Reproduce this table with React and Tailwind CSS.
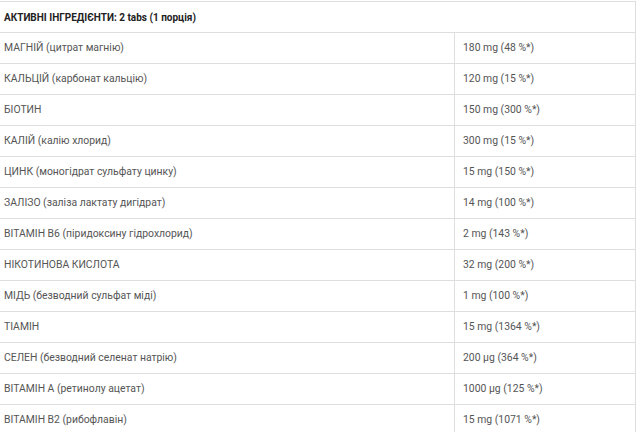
const rows = [
  ['МАГНІЙ (цитрат магнію)', '180 mg (48 %*)'],
  ['КАЛЬЦІЙ (карбонат кальцію)', '120 mg (15 %*)'],
  ['БІОТИН', '150 mg (300 %*)'],
  ['КАЛІЙ (калію хлорид)', '300 mg (15 %*)'],
  ['ЦИНК (моногідрат сульфату цинку)', '15 mg (150 %*)'],
  ['ЗАЛІЗО (заліза лактату дигідрат)', '14 mg (100 %*)'],
  ['ВІТАМІН B6 (піридоксину гідрохлорид)', '2 mg (143 %*)'],
  ['НІКОТИНОВА КИСЛОТА', '32 mg (200 %*)'],
  ['МІДЬ (безводний сульфат міді)', '1 mg (100 %*)'],
  ['ТІАМІН', '15 mg (1364 %*)'],
  ['СЕЛЕН (безводний селенат натрію)', '200 µg (364 %*)'],
  ['ВІТАМІН A (ретинолу ацетат)', '1000 µg (125 %*)'],
  ['ВІТАМІН B2 (рибофлавін)', '15 mg (1071 %*)'],
];

export default function App() {
  return (
    <div className="w-[640px] h-[432px] overflow-hidden bg-white pt-px" style={{ fontFamily: 'Roboto, sans-serif' }}>
      <table className="-ml-[4px] w-[640px] border-collapse text-[10.4px]">
        <tbody>
          <tr className="h-[31px]">
            <td colSpan={2} className="border border-[#dedede] pl-[7px] text-[10px] font-bold text-[#222]">
              АКТИВНІ ІНГРЕДІЄНТИ: 2 tabs (1 порція)
            </td>
          </tr>
          {rows.map(([name, value]) => (
            <tr key={name} className="h-[31px]">
              <td className="w-[458px] border border-[#dedede] pl-[7px] text-[#555]">{name}</td>
              <td className="border border-[#dedede] pl-[8px] text-[#555]">{value}</td>
            </tr>
          ))}
        </tbody>
      </table>
    </div>
  );
}
